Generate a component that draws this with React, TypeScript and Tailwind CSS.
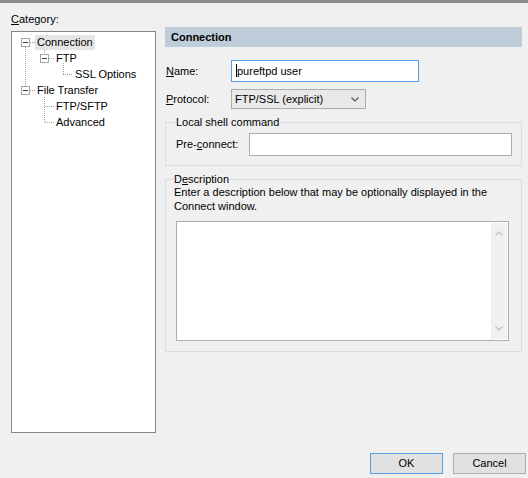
import React from 'react';

const treeRows = [
  { label: 'Connection', depth: 0, selected: true },
  { label: 'FTP', depth: 1 },
  { label: 'SSL Options', depth: 2 },
  { label: 'File Transfer', depth: 0 },
  { label: 'FTP/SFTP', depth: 1 },
  { label: 'Advanced', depth: 1 },
];

const indent = ['ml-[23px]', 'ml-[42px]', 'ml-[61px]'];

function ExpandBox({ x, y }: { x: number; y: number }) {
  return (
    <g>
      <rect x={x + 0.5} y={y + 0.5} width={8} height={8} fill="#fff" stroke="#a6a6a6" />
      <line x1={x + 2} y1={y + 4.5} x2={x + 7} y2={y + 4.5} stroke="#3c3c3c" />
    </g>
  );
}

function TreeLines() {
  const dot = { stroke: '#a0a0a0', strokeDasharray: '1 1', shapeRendering: 'crispEdges' as const };
  return (
    <svg className="absolute left-0 top-0" width={143} height={400}>
      <g transform="translate(-12,-32)">
        {/* root level */}
        <line x1={25.5} y1={47} x2={25.5} y2={86} {...dot} />
        <line x1={30} y1={42.5} x2={35} y2={42.5} {...dot} />
        <line x1={30} y1={90.5} x2={35} y2={90.5} {...dot} />
        {/* FTP */}
        <line x1={44.5} y1={50} x2={44.5} y2={54} {...dot} />
        <line x1={49} y1={58.5} x2={54} y2={58.5} {...dot} />
        {/* SSL Options */}
        <line x1={63.5} y1={63} x2={63.5} y2={75} {...dot} />
        <line x1={63} y1={74.5} x2={73} y2={74.5} {...dot} />
        {/* File Transfer children */}
        <line x1={44.5} y1={97} x2={44.5} y2={123} {...dot} />
        <line x1={45} y1={106.5} x2={55} y2={106.5} {...dot} />
        <line x1={45} y1={122.5} x2={55} y2={122.5} {...dot} />
        <ExpandBox x={21} y={38} />
        <ExpandBox x={40} y={54} />
        <ExpandBox x={21} y={86} />
      </g>
    </svg>
  );
}

function GroupBox({ title, titleOffset, className, children }: { title: React.ReactNode; titleOffset: string; className: string; children: React.ReactNode }) {
  return (
    <div className={`relative border border-[#dcdcdc] ${className}`}>
      <span className={`absolute top-[-9px] ${titleOffset} bg-[#f0f0f0] px-[1px] leading-[16px]`}>{title}</span>
      {children}
    </div>
  );
}

export default function App() {
  return (
    <div className="w-[528px] h-[478px] bg-[#f0f0f0] text-[11px] text-black font-['Liberation_Sans',Arial,sans-serif] flex flex-col overflow-hidden">
      <div className="h-[3px] bg-[#8a8a8a]" />

      <div className="flex pl-[11px]">
        {/* category tree */}
        <div className="w-[145px] flex flex-col">
          <div className="pt-[8px] leading-[16px]">
            <span className="underline">C</span>ategory:
          </div>
          <div className="mt-[4px] h-[402px] border border-[#828790] bg-white relative pt-[2px]">
            <TreeLines />
            {treeRows.map((r) => (
              <div key={r.label} className="h-[16px] flex items-center">
                <span className={`${indent[r.depth]} px-[2px] h-[15px] leading-[15px] ${r.selected ? 'bg-[#e5e5e5]' : ''}`}>
                  {r.label}
                </span>
              </div>
            ))}
          </div>
        </div>

        {/* page */}
        <div className="ml-[9px] w-[357px] flex flex-col">
          <div className="mt-[24px] h-[20px] bg-[#bfcddb] pl-[6px] leading-[20px] font-bold">Connection</div>

          <div className="mt-[13px] flex items-center">
            <div className="w-[66px] pl-[1px]">
              <span className="underline">N</span>ame:
            </div>
            <div className="relative w-[188px] h-[22px] border border-[#569de5] bg-white pl-[5px] leading-[20px]">
              pureftpd user
              <span className="absolute left-[4px] top-[3px] w-[1px] h-[13px] bg-black" />
            </div>
          </div>

          <div className="mt-[7px] flex items-center">
            <div className="w-[66px] pl-[1px]">
              <span className="underline">P</span>rotocol:
            </div>
            <div className="w-[135px] h-[20px] border border-[#acacac] bg-[#e9e9e9] pl-[3px] pr-[6px] flex items-center justify-between">
              <span>FTP/SSL (explicit)</span>
              <svg width="8" height="5" viewBox="0 0 8 5">
                <path d="M0.5 0.5 L4 4 L7.5 0.5" fill="none" stroke="#606060" strokeWidth="1.3" />
              </svg>
            </div>
          </div>

          <GroupBox title="Local shell command" titleOffset="left-[9px]" className="mt-[13px] h-[44px] pt-[10px] pl-[10px] pr-[9px]">
            <div className="flex items-center">
              <div className="w-[73px]">
                Pre-<span className="underline">c</span>onnect:
              </div>
              <div className="w-[263px] h-[23px] border border-[#abadb3] bg-white" />
            </div>
          </GroupBox>

          <GroupBox
            title={<>D<span className="underline">e</span>scription</>}
            titleOffset="left-[7px]"
            className="mt-[13px] h-[173px] pt-[5px] pl-[8px]"
          >
            <div className="leading-[14px] whitespace-nowrap">
              Enter a description below that may be optionally displayed in the
              <br />
              Connect window.
            </div>
            <div className="mt-[8px] ml-[2px] w-[333px] h-[120px] border border-[#abadb3] bg-white flex justify-end p-[1px]">
              <div className="w-[16px] bg-[#f0f0f0] flex flex-col items-center justify-between py-[8px]">
                <svg width="8" height="5" viewBox="0 0 8 5">
                  <path d="M0.5 4.5 L4 1 L7.5 4.5" fill="none" stroke="#c2c2c2" strokeWidth="1.3" />
                </svg>
                <svg width="8" height="5" viewBox="0 0 8 5">
                  <path d="M0.5 0.5 L4 4 L7.5 0.5" fill="none" stroke="#c2c2c2" strokeWidth="1.3" />
                </svg>
              </div>
            </div>
          </GroupBox>
        </div>
      </div>

      <div className="mt-[20px] flex justify-end gap-[10px] pr-[2px]">
        <button className="w-[73px] h-[21px] border border-[#569de5] bg-[#e1e1e1] leading-[19px]">OK</button>
        <button className="w-[73px] h-[21px] border border-[#adadad] bg-[#e1e1e1] leading-[19px]">Cancel</button>
      </div>
    </div>
  );
}
